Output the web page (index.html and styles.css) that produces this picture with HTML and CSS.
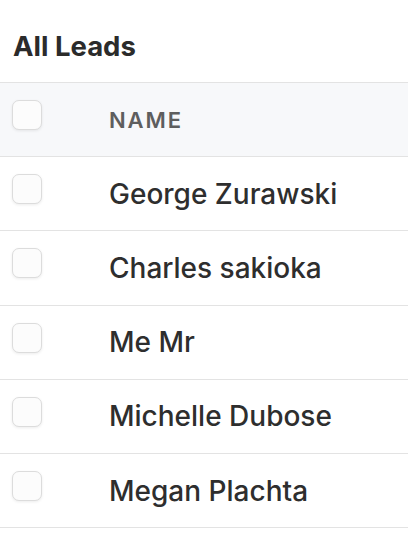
FILE: index.html
```html
<!DOCTYPE html>
<html>
<head>
<meta charset="utf-8">
<link rel="stylesheet" href="styles.css">
</head>
<body>
<div class="title">All Leads</div>
<div class="table">
  <div class="row head">
    <div class="cell-check"><span class="box"></span></div>
    <div class="cell-name">NAME</div>
  </div>
  <div class="row">
    <div class="cell-check"><span class="box"></span></div>
    <div class="cell-name">George Zurawski</div>
  </div>
  <div class="row">
    <div class="cell-check"><span class="box"></span></div>
    <div class="cell-name">Charles sakioka</div>
  </div>
  <div class="row">
    <div class="cell-check"><span class="box"></span></div>
    <div class="cell-name">Me Mr</div>
  </div>
  <div class="row">
    <div class="cell-check"><span class="box"></span></div>
    <div class="cell-name">Michelle Dubose</div>
  </div>
  <div class="row">
    <div class="cell-check"><span class="box"></span></div>
    <div class="cell-name">Megan Plachta</div>
  </div>
</div>
</body>
</html>
```
FILE: styles.css
```css
html, body {
  margin: 0;
  padding: 0;
  background: #ffffff;
  font-family: Inter, "Noto Sans", sans-serif;
  color: #2e2e2e;
}
.title {
  height: 82px;
  box-sizing: border-box;
  padding: 30px 0 0 13px;
  font-size: 27.5px;
  line-height: 32px;
  font-weight: 700;
  color: #2b2b2b;
}
.table {
  border-top: 1px solid #e3e3e3;
}
.row {
  display: grid;
  grid-template-columns: 97px 1fr;
  height: 74.2px;
  box-sizing: border-box;
  border-bottom: 1px solid #e3e3e3;
  padding-left: 12px;
  align-items: center;
}
.row.head {
  background: #f7f8fa;
}
.cell-check {
  align-self: start;
  padding-top: 17px;
  display: flex;
}
.box {
  width: 30px;
  height: 30px;
  box-sizing: border-box;
  border: 1.5px solid #dcdcdc;
  border-radius: 7px;
  background: #fcfcfc;
  box-shadow: 0 1px 3px rgba(0,0,0,0.08);
}
.cell-name {
  font-size: 28px;
  font-weight: 500;
  color: #2e2e2e;
  line-height: 34px;
}
.head .cell-name {
  font-size: 22px;
  font-weight: 600;
  letter-spacing: 1.9px;
  color: #5e5e5e;
}
```
